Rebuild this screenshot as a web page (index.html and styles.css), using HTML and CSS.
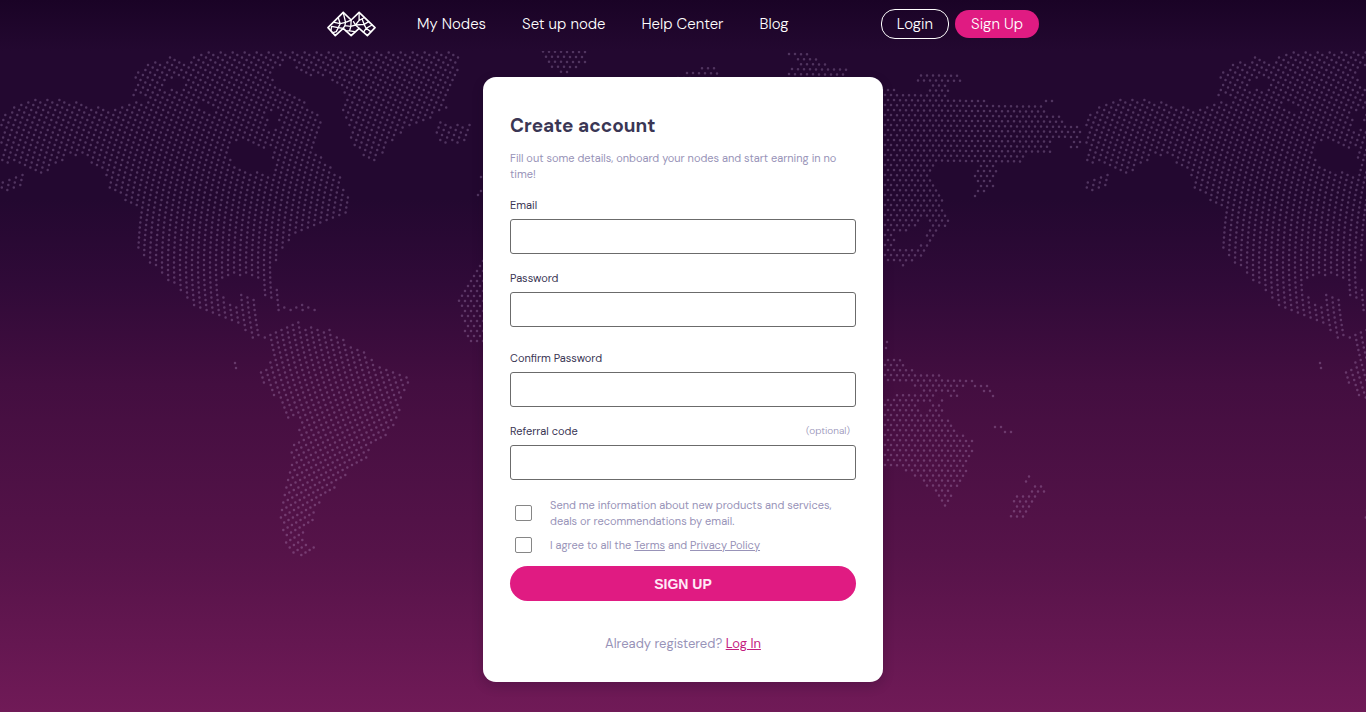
FILE: index.html
```html
<!DOCTYPE html>
<html lang="en">
<head>
<meta charset="utf-8">
<title>Create account</title>
<link rel="stylesheet" href="styles.css">
</head>
<body>
<svg class="world" aria-hidden="true">
  <defs>
    <pattern id="tile" width="1085" height="3000" patternUnits="userSpaceOnUse">
      <path id="dots" class="dots"/>
    </pattern>
  </defs>
  <rect width="100%" height="100%" fill="url(#tile)"/>
</svg>
<header class="header">
  <div class="bar">
    <a class="logo" href="#" aria-label="Home">
      <svg viewBox="50 34 148 78" width="49" height="26" fill="none" stroke="#fff" stroke-linejoin="round" stroke-linecap="round">
        <path stroke-width="5" d="M53 84 99 38 123 61 147 38 195 84 172 108 147 86 123 108 99 86 75 108Z"/>
        <path stroke-width="4" d="M84 54 90 72 72 68 M90 72 106 68 99 38 M106 68 123 61 M90 72 84 84 64 80 62 92 M84 84 78 96 66 100 M84 84 99 86 104 78 106 68 M104 78 122 80 123 61 M122 80 118 94 108 94 M118 94 134 96 M122 80 136 76 130 66 M136 76 147 62 147 38 M147 62 162 54 M156 58 162 74 176 66 M162 74 136 76 147 86 M162 74 168 86 186 76 M168 86 160 98 M168 86 182 96"/>
      </svg>
    </a>
    <nav class="nav" aria-label="Main">
      <a href="#">My Nodes</a>
      <a href="#">Set up node</a>
      <a href="#">Help Center</a>
      <a href="#">Blog</a>
    </nav>
    <div class="actions">
      <a class="pill outline" href="#">Login</a>
      <a class="pill solid" href="#">Sign Up</a>
    </div>
  </div>
</header>
<main class="main">
  <form class="card">
    <h1>Create account</h1>
    <p class="intro">Fill out some details, onboard your nodes and start earning in no time!</p>
    <div class="fields">
      <div class="field">
        <label for="email">Email</label>
        <input id="email" type="email">
      </div>
      <div class="field">
        <label for="password">Password</label>
        <input id="password" type="password">
      </div>
      <div class="field spaced">
        <label for="confirm">Confirm Password</label>
        <input id="confirm" type="password">
      </div>
      <div class="field">
        <label for="referral">Referral code <span class="optional">(optional)</span></label>
        <input id="referral" type="text">
      </div>
    </div>
    <div class="checks">
      <div class="check">
        <input id="news" type="checkbox">
        <label for="news">Send me information about new products and services, deals or recommendations by email.</label>
      </div>
      <div class="check">
        <input id="agree" type="checkbox">
        <label for="agree">I agree to all the <a href="#">Terms</a> and <a href="#">Privacy Policy</a></label>
      </div>
    </div>
    <button class="submit" type="submit">SIGN UP</button>
    <p class="login">Already registered? <a href="#">Log In</a></p>
  </form>
</main>
<script src="map.js"></script>
</body>
</html>
```
FILE: styles.css
```css
* { box-sizing: border-box; }

body {
  margin: 0;
  min-height: 100vh;
  position: relative;
  font-family: "DM Sans", Inter, "Liberation Sans", sans-serif;
  font-size: 11px;
  line-height: 16px;
  color: #3a3654;
  background: linear-gradient(#230830 0, #230830 28%, #300a38 40%, #430e40 54%, #561349 78%, #701a57 100%);
}

a { color: inherit; }

.world {
  position: absolute;
  top: 0;
  left: 0;
  width: 100%;
  height: 100%;
  z-index: -1;
}

.dots {
  fill: none;
  stroke: #d9b8ea;
  stroke-opacity: .25;
  stroke-width: 2.5;
  stroke-linecap: round;
}

.header {
  background: linear-gradient(#1a0326, #230830);
  padding: 8px 24px 12px;
}

.bar {
  display: flex;
  align-items: center;
  max-width: 712px;
  min-height: 31px;
  margin: 0 auto;
  color: #fff;
  font-size: 15px;
  font-weight: 300;
  line-height: 20px;
}

.bar a { text-decoration: none; }

.logo { display: flex; }

.nav {
  display: flex;
  gap: 36px;
  margin-left: 41px;
}

.actions {
  display: flex;
  align-items: center;
  gap: 6px;
  margin-left: auto;
}

.pill {
  border-radius: 14px;
  padding: 4px 16px;
}

.outline {
  border: 1px solid #fff;
  padding: 4px 15px;
}

.solid { background: #e01b82; }

.main {
  display: flex;
  justify-content: center;
  padding: 26px 16px 30px;
}

.card {
  width: 100%;
  max-width: 400px;
  padding: 37px 27px 28px;
  border-radius: 13px;
  background: #fff;
  box-shadow: 0 4px 12px rgba(20, 0, 30, .2);
}

h1 {
  margin: 0 0 12px;
  font-size: 19px;
  line-height: 24px;
}

.intro {
  margin: 0 0 15px;
  color: #9893b8;
}

.fields {
  display: grid;
  gap: 16px;
}

.field {
  display: grid;
  gap: 6px;
}

.spaced { padding-top: 7px; }

.field label {
  display: flex;
  justify-content: space-between;
}

.optional {
  padding-right: 6px;
  font-size: 10px;
  font-weight: 300;
  color: #9893b8;
}

.field input {
  width: 100%;
  height: 35px;
  padding: 0 12px;
  border: 1px solid #6b6b6b;
  border-radius: 3px;
  background: #fff;
  font: inherit;
}

.checks {
  display: grid;
  gap: 8px;
  margin: 17px 0 13px;
}

.check {
  display: flex;
  align-items: center;
  gap: 18px;
  padding-left: 5px;
  color: #9893b8;
}

.check input {
  appearance: none;
  flex: none;
  width: 17px;
  height: 16px;
  margin: 0;
  border: 1px solid #868686;
  border-radius: 2px;
  background: #fff;
}

.check input:checked { background: #e01b82; }

.submit {
  width: 100%;
  height: 35px;
  border: 0;
  border-radius: 18px;
  background: #e01b82;
  color: #ffeaf7;
  font: bold 14px "Liberation Sans", Arial, sans-serif;
}

.login {
  margin: 33px 0 0;
  text-align: center;
  font-size: 13px;
  line-height: 20px;
  color: #9893b8;
}

.login a { color: #c41d7f; }
```
FILE: map.js
```js
// Dotted world map. Each outline is a flat list of x,y pairs.
const americas = [
  [0,115,17,105,30,100,68,100,90,105,108,109,120,107,128,101,140,103,150,98,131,96,136,73,148,60,160,64,172,55,186,62,200,51,291,51,290,58,272,75,277,85,310,106,325,123,315,138,312,152,325,159,340,177,352,205,347,216,320,224,300,232,287,242,278,258,272,265,272,276,278,290,279,302,290,307,300,301,320,308,320,311,277,311,274,300,263,298,258,279,252,276,235,277,220,280,222,291,226,301,237,303,239,293,250,295,262,311,256,318,259,335,253,338,227,318,210,316,198,310,180,292,163,277,136,247,139,220,137,210,122,197,109,190,108,178,97,168,80,154,68,157,55,164,52,174,32,173,20,163,0,163],
  [0,181,10,179,22,174,30,175,20,186,8,191,0,190],
  [292,51,460,51,458,70,452,87,447,108,430,119,400,133,387,148,376,163,363,155,352,145,347,125,342,112,347,100,335,83,328,75,305,77,293,66],
  [438,122,472,124,470,141,450,145,436,138],
  [263,338,270,333,280,329,297,320,303,325,327,328,342,339,363,350,377,362,400,373,411,379,403,400,397,420,387,436,370,450,367,458,350,472,333,490,320,503,312,523,303,533,303,543,315,546,307,558,297,556,285,545,280,520,285,493,290,470,290,447,298,440,297,418,284,418,277,400,263,382,259,371,268,367,272,350]
];
const americasHoles = [
  [231,150,237,140,245,138,258,147,272,150,273,165,268,175,248,170,233,166],
  [164,82,172,78,182,82,180,90,166,90],
  [267,112,277,112,280,128,270,130],
  [200,104,206,102,215,108,210,112]
];
const east = [
  [458,295,466,286,478,262,484,255,500,255,500,345,473,345,463,328,460,310],
  [541,51,588,51,585,64,568,73,558,73,546,62],
  [676,78,690,71,712,65,719,69,715,82],
  [780,51,805,51,825,63,848,69,848,82,775,82,785,74,802,62],
  [883,86,897,90,907,95,920,95,930,90,928,81,917,81,922,73,955,73,964,81,948,83,950,90,945,95,960,97,987,101,990,105,1043,104,1047,112,1058,115,1067,122,1081,125,1081,132,1084,140,1083,147,1070,147,1067,137,1052,137,1050,152,1030,155,1023,162,997,162,998,175,993,187,985,193,972,197,977,187,972,170,980,162,937,162,931,172,935,180,944,197,942,212,950,221,943,228,933,243,928,252,913,262,902,268,895,263,878,258,878,86],
  [878,356,897,356,907,362,905,370,928,371,945,376,955,381,966,376,978,382,988,386,999,399,992,400,983,391,973,385,959,387,958,399,950,399,945,391,935,394,928,394,917,390,912,384,878,379],
  [878,401,897,395,934,395,930,404,920,404,917,415,928,415,930,401,944,400,944,415,958,431,974,441,970,463,961,486,947,488,923,485,913,474,903,470,878,470],
  [932,488,947,488,955,498,949,509,938,504],
  [1028,469,1035,477,1031,483,1046,484,1046,492,1034,502,1024,515,1020,521,1005,521,1013,502,1017,494,1031,492,1033,485,1022,483]
];
const eastHoles = [[895,232,915,229,922,217,930,222,925,241,917,247,905,250,895,245]];
const singles = [[235,363],[236,368],[995,427],[1001,427],[1005,432],[1011,432],[887,342],[886,348],[1046,101],[1052,101],[481,177],[481,191],[478,195]];

function inside(p, x, y) {
  let hit = false;
  for (let i = 0, j = p.length - 2; i < p.length; j = i, i += 2) {
    if ((p[i + 1] > y) !== (p[j + 1] > y) &&
        x < (p[j] - p[i]) * (y - p[i + 1]) / (p[j + 1] - p[i + 1]) + p[i]) hit = !hit;
  }
  return hit;
}

function land(areas, holes, x, y) {
  return y > 51 && areas.some(a => inside(a, x, y)) && !holes.some(h => inside(h, x, y));
}

const points = [...singles];

// West: columns that bend away from the equator.
for (let c = -40; c < 90; c++) {
  for (let r = 0; r < 105; r++) {
    const y = 50 + r * 5 + (c & 1) * 2.5;
    const x = c * 6 + 0.0013 * (y - 265) ** 2;
    if (x > 0 && land(americas, americasHoles, x, y)) points.push([x, y]);
  }
}

// East: staggered rows that dip slightly to the right.
for (let r = 0; r < 100; r++) {
  for (let c = 0; c < 110; c++) {
    const x = 450 + c * 6 + (r & 1) * 3;
    const y = 50 + r * 5 + 0.01 * (x - 880);
    if (land(east, eastHoles, x, y)) points.push([x, y]);
  }
}

document.getElementById("dots").setAttribute(
  "d", points.map(([x, y]) => `M${x.toFixed(1)} ${y.toFixed(1)}h.01`).join("")
);
```
